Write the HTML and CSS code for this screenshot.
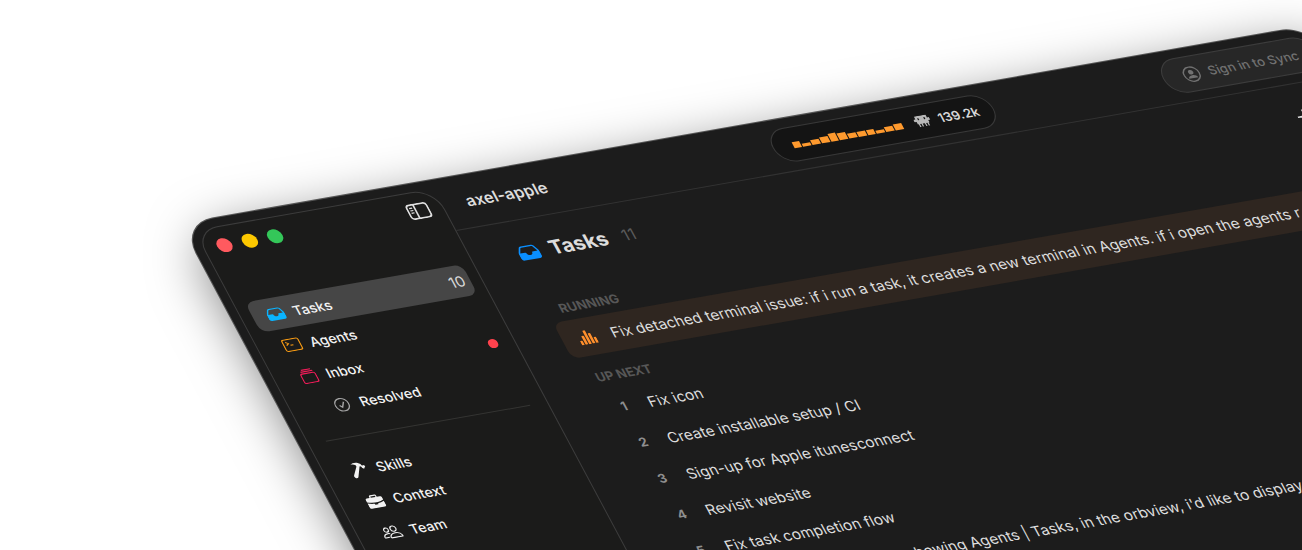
FILE: index.html
```html
<!DOCTYPE html>
<html lang="en">
<head>
<meta charset="utf-8">
<title>axel-apple</title>
<link rel="stylesheet" href="styles.css">
</head>
<body>
<svg class="defs" aria-hidden="true">
  <symbol id="tray" viewBox="0 0 20 16">
    <path fill="currentColor" fill-rule="evenodd" d="M5.200 1h9.600c1 0 1.700.4 2.200 1.200l2.300 4.600c.3.6.4 1 .4 1.700v4c0 1.500-.9 2.500-2.500 2.500H2.800C1.200 15 .3 14 .3 12.500v-4c0-.7.1-1.100.4-1.700L3 2.200C3.500 1.400 4.200 1 5.200 1Zm.2 1.300c-.6 0-.9.200-1.200.6L1.900 7.600h4.600c.5 0 .8.300.8.800 0 1.300 1.200 2.300 2.700 2.300s2.700-1 2.700-2.300c0-.5.3-.8.8-.8h4.600l-2.300-4.700c-.3-.4-.6-.6-1.200-.6H5.400Z"/>
  </symbol>
</svg>
<div class="stage">
  <div class="window">
    <aside class="sidebar">
      <div class="sidebar-head">
        <div class="lights">
          <button class="light red" aria-label="Close"></button>
          <button class="light yellow" aria-label="Minimize"></button>
          <button class="light green" aria-label="Zoom"></button>
        </div>
        <button class="icon-button" aria-label="Toggle sidebar">
          <svg width="21" height="16" viewBox="0 0 22 17" fill="none" stroke="currentColor" stroke-width="1.700"><rect x="1" y="1" width="20" height="15" rx="3"/><path d="M8.500 1v15"/><path stroke-width="1.300" d="M3.200 4.500h3M3.200 7h3M3.200 9.500h3"/></svg>
        </button>
      </div>
      <nav class="nav">
        <a class="item active" href="#tasks"><svg class="ico blue" width="17" height="14"><use href="#tray"/></svg><span>Tasks</span><span class="count">10</span></a>
        <a class="item" href="#agents"><svg class="ico orange" width="17" height="13" viewBox="0 0 18 14" fill="none" stroke="currentColor" stroke-width="1.200"><rect x=".8" y=".8" width="16.400" height="12.400" rx="1.800"/><path d="M3.500 3.500l2.500 1.700-2.500 1.700M7.200 7.200h3"/></svg><span>Agents</span></a>
        <a class="item" href="#inbox"><svg class="ico pink" width="15" height="15" viewBox="0 0 16 16" fill="none" stroke="currentColor" stroke-width="1.200"><rect x=".8" y="5" width="14.400" height="10.200" rx="1.800"/><path d="M2 3h12M3.300 1h9.400"/></svg><span>Inbox</span><span class="dot"></span></a>
        <a class="item nested" href="#resolved"><svg class="ico gray" width="14" height="14" viewBox="0 0 14 14" fill="none" stroke="currentColor" stroke-width="1.200"><circle cx="7" cy="7" r="6.300"/><path d="M4.500 7.300l1.800 2.200 3.200-5"/></svg><span>Resolved</span></a>
      </nav>
      <hr class="rule">
      <nav class="nav">
        <a class="item" href="#skills"><svg class="ico" width="16" height="16" viewBox="0 0 16 16" fill="currentColor"><path d="M3.400 1.600C5.800.1 8.600 0 11 1.500l1.400 1.200.3 1.300 1 .3.7-.4L15.700 5.200 13.400 7.700 12 6.400l.1-.8-1-.9-.6.1L4.600 14.600c-.8.9-2 1-2.800.3-.8-.7-.8-1.800-.1-2.700L7.700 4.400 7.900 3.200C6.800 2 5.200 1.500 3.400 1.600Z"/></svg><span>Skills</span></a>
        <a class="item" href="#context"><svg class="ico" width="16" height="14" viewBox="0 0 18 15" fill="currentColor"><path fill-rule="evenodd" d="M5.200 3V1.800C5.200.9 5.900.2 6.800.2h4.400c.9 0 1.600.7 1.600 1.600V3H15.800C17 3 17.700 3.700 17.700 4.900v2.200C12 9.400 6 9.400.3 7.100V4.900C.3 3.700 1 3 2.200 3Zm1.300 0h5V1.900c0-.3-.1-.4-.4-.4H6.900c-.3 0-.4.1-.4.400Z"/><path d="M.3 8.400c2.300.9 4.600 1.400 6.900 1.600v.6c0 .4.200.6.600.6h2.400c.4 0 .6-.2.6-.6V10c2.300-.2 4.600-.7 6.900-1.600v4.500c0 1.200-.7 1.900-1.900 1.900H2.200C1 14.800.3 14.100.3 12.900Z"/></svg><span>Context</span></a>
        <a class="item" href="#team"><svg class="ico" width="18" height="13" viewBox="0 0 20 14" fill="none" stroke="currentColor" stroke-width="1.200"><circle cx="5.500" cy="4" r="2.300"/><circle cx="13" cy="3.700" r="2.900"/><path d="M7.600 13.200c-.6 0-.9-.4-.7-1.100.7-2.200 3-3.700 6.100-3.700s5.400 1.500 6.100 3.700c.2.7-.1 1.100-.7 1.100ZM7.800 8.600C7.100 8.200 6.300 8 5.400 8 3 8 1.300 9.300.8 11.200c-.2.6.1 1 .7 1h4"/></svg><span>Team</span></a>
      </nav>
    </aside>
    <main class="main">
      <header class="toolbar">
        <h1 class="project">axel-apple</h1>
        <div class="usage">
          <div class="bars"><i class="h6"></i><i class="h3"></i><i class="h5"></i><i class="h6"></i><i class="h8"></i><i class="h7"></i><i class="h5"></i><i class="h5"></i><i class="h5"></i><i class="h3"></i><i class="h5"></i><i class="h6"></i></div>
          <svg class="bot" width="15" height="11" viewBox="0 0 15 11" fill="currentColor"><path fill-rule="evenodd" d="M2 0h11v3h2v2.500h-2V8h-.8v3h-1.200V8H9.700v3H8.500V8h-2v3H5.300V8H4v3H2.800V8H2V5.500H0V3h2ZM4 2.200v2h1.200v-2Zm5.800 0v2H11v-2Z"/></svg>
          <span>139.2k</span>
        </div>
        <button class="sync">
          <svg width="16" height="16" viewBox="0 0 16 16" fill="none" stroke="currentColor" stroke-width="1.300"><circle cx="8" cy="8" r="7.200"/><circle cx="8" cy="6" r="2.300" fill="currentColor" stroke="none"/><path fill="currentColor" stroke="none" d="M3.600 12c.5-2 2.200-3 4.400-3s3.900 1 4.400 3Z"/></svg>
          <span>Sign in to Sync</span>
        </button>
      </header>
      <section class="content">
        <div class="heading">
          <svg class="azure" width="20" height="16"><use href="#tray"/></svg>
          <h2>Tasks</h2>
          <span class="total">11</span>
          <button class="icon-button add" aria-label="Add task"><svg width="14" height="14" viewBox="0 0 14 14" stroke="currentColor" stroke-width="1.500"><path d="M7 0v14M0 7h14"/></svg></button>
        </div>
        <h3 class="label">RUNNING</h3>
        <div class="task running">
          <svg class="lead" width="16" height="14" viewBox="0 0 16 14" fill="currentColor"><rect x="0" y="9.500" width="2.400" height="4.500" rx=".6"/><rect x="3.400" y="5" width="2.400" height="9" rx=".6"/><rect x="6.800" y="0" width="2.400" height="14" rx=".6"/><rect x="10.200" y="3.500" width="2.400" height="10.500" rx=".6"/><rect x="13.600" y="8" width="2.400" height="6" rx=".6"/></svg>
          <span>Fix detached terminal issue: if i run a task, it creates a new terminal in Agents. if i open the agents r</span>
        </div>
        <h3 class="label next">UP NEXT</h3>
        <div class="task"><span class="lead">1</span><span>Fix icon</span></div>
        <div class="task"><span class="lead">2</span><span>Create installable setup / CI</span></div>
        <div class="task"><span class="lead">3</span><span>Sign-up for Apple itunesconnect</span></div>
        <div class="task"><span class="lead">4</span><span>Revisit website</span></div>
        <div class="task"><span class="lead">5</span><span>Fix task completion flow</span></div>
        <div class="task"><span class="lead">6</span><span>When the window isn't showing Agents | Tasks, in the orbview, i'd like to display</span></div>
      </section>
    </main>
  </div>
</div>
</body>
</html>
```
FILE: styles.css
```css
* { box-sizing: border-box; }

body {
  margin: 0;
  background: #fff;
  color: #dcdcdc;
  font-family: Inter, "Liberation Sans", sans-serif;
  font-size: 14px;
}

h1, h2, h3 { margin: 0; }

button {
  padding: 0;
  border: 0;
  background: none;
  color: inherit;
  font: inherit;
}

svg { display: block; flex: none; }

.defs { position: absolute; width: 0; height: 0; }

.stage {
  height: 100vh;
  overflow: hidden;
}

/* The window lies tilted on the page, as a parallel projection. */
.window {
  display: flex;
  width: 82.5vw;
  min-height: 640px;
  border-radius: 30px;
  background: #1c1c1c;
  box-shadow: 0 0 0 1px #555, 0 14px 48px rgba(0, 0, 0, 0.5);
  transform: matrix(1.053, -0.185, 0.521, 0.975, 181, 224);
  transform-origin: 0 0;
}

.sidebar {
  width: 228px;
  margin: 8px 0 8px 8px;
  border: 1px solid #3c3c3c;
  border-radius: 22px;
  background: #1b1b1a;
}

.sidebar-head {
  display: flex;
  align-items: center;
  justify-content: space-between;
  height: 35px;
  padding: 0 12px;
}

.lights { display: flex; gap: 10px; }

.light {
  width: 14px;
  height: 14px;
  border-radius: 50%;
}

.red { background: #ff5a5f; }
.yellow { background: #fdc800; }
.green { background: #34c759; }

.icon-button { color: #e0e0e0; }

.nav {
  display: flex;
  flex-direction: column;
  gap: 1px;
  padding: 0 10px;
}

.sidebar-head + .nav { margin-top: 40px; }

.item {
  display: grid;
  grid-template-columns: 24px 1fr auto;
  align-items: center;
  column-gap: 5px;
  height: 31px;
  padding: 0 5px 0 9px;
  border-radius: 8px;
  color: #f2f2f2;
  font-size: 13px;
  font-weight: 500;
  text-decoration: none;
}

.item.active { background: #464646; }
.item.nested { padding-left: 25px; }
.ico { justify-self: center; }
.count { color: #d8d8d8; font-size: 14px; font-weight: 400; }
.blue { color: #0ab4ff; }
.azure { color: #0a8fff; }
.orange { color: #f59a14; }
.pink { color: #ee1c58; }
.gray { color: #a5a5a5; }

.dot {
  width: 9px;
  height: 9px;
  border-radius: 50%;
  background: #ff424d;
}

.rule {
  height: 1px;
  margin: 16px 16px;
  border: 0;
  background: #343432;
}

.main {
  display: flex;
  flex: 1;
  flex-direction: column;
  min-width: 0;
}

.toolbar {
  display: flex;
  align-items: center;
  height: 52px;
  padding: 0 8px 0 22px;
  border-bottom: 1px solid #323232;
}

.project {
  flex: 1;
  font-size: 15px;
  font-weight: 600;
}

.usage {
  display: flex;
  align-items: center;
  height: 34px;
  margin-right: 161px;
  padding: 0 13px 0 18px;
  border: 1px solid #383838;
  border-radius: 17px;
  background: #141414;
  color: #d8d8d8;
  font-size: 12px;
  font-weight: 600;
}

.bars {
  display: flex;
  align-items: flex-end;
  gap: 1px;
  width: 104px;
  height: 8px;
}

.bars i { flex: 1; background: #ff9a2e; }
.h3 { height: 3px; }
.h5 { height: 5px; }
.h6 { height: 6px; }
.h7 { height: 7px; }
.h8 { height: 8px; }

.bot { margin: 0 8px 0 12px; color: #b8b8b8; }

.sync {
  display: flex;
  align-items: center;
  gap: 8px;
  height: 35px;
  padding: 0 17px 0 18px;
  border: 1px solid #3c3c3c;
  border-radius: 18px;
  background: #272727;
  color: #717171;
  font-size: 12px;
  font-weight: 500;
}

.content { padding: 15px 41px; }

.heading {
  display: flex;
  align-items: center;
  gap: 10px;
  height: 33px;
  padding-left: 2px;
}

.heading h2 { font-size: 19px; font-weight: 700; }
.total { margin-left: 4px; color: #5a5a5a; font-size: 15px; }
.add { margin-left: auto; }

.label {
  margin-top: 34px;
  padding: 0 12px;
  color: #575757;
  font-size: 12px;
  font-weight: 700;
  line-height: 16px;
}

.label.next { margin-top: 14px; }

.task {
  display: flex;
  align-items: center;
  height: 37px;
  padding: 0 12px;
  border-radius: 8px;
  white-space: nowrap;
}

.label + .task { margin-top: 4px; }

.task.running { background: #2f2620; }

.lead {
  width: 22px;
  margin-right: 12px;
  color: #8e8e8e;
  font-size: 12px;
  font-weight: 700;
  text-align: center;
}

svg.lead { width: 16px; margin: 0 15px 0 3px; }

.running .lead { color: #ff8f2c; }
```
